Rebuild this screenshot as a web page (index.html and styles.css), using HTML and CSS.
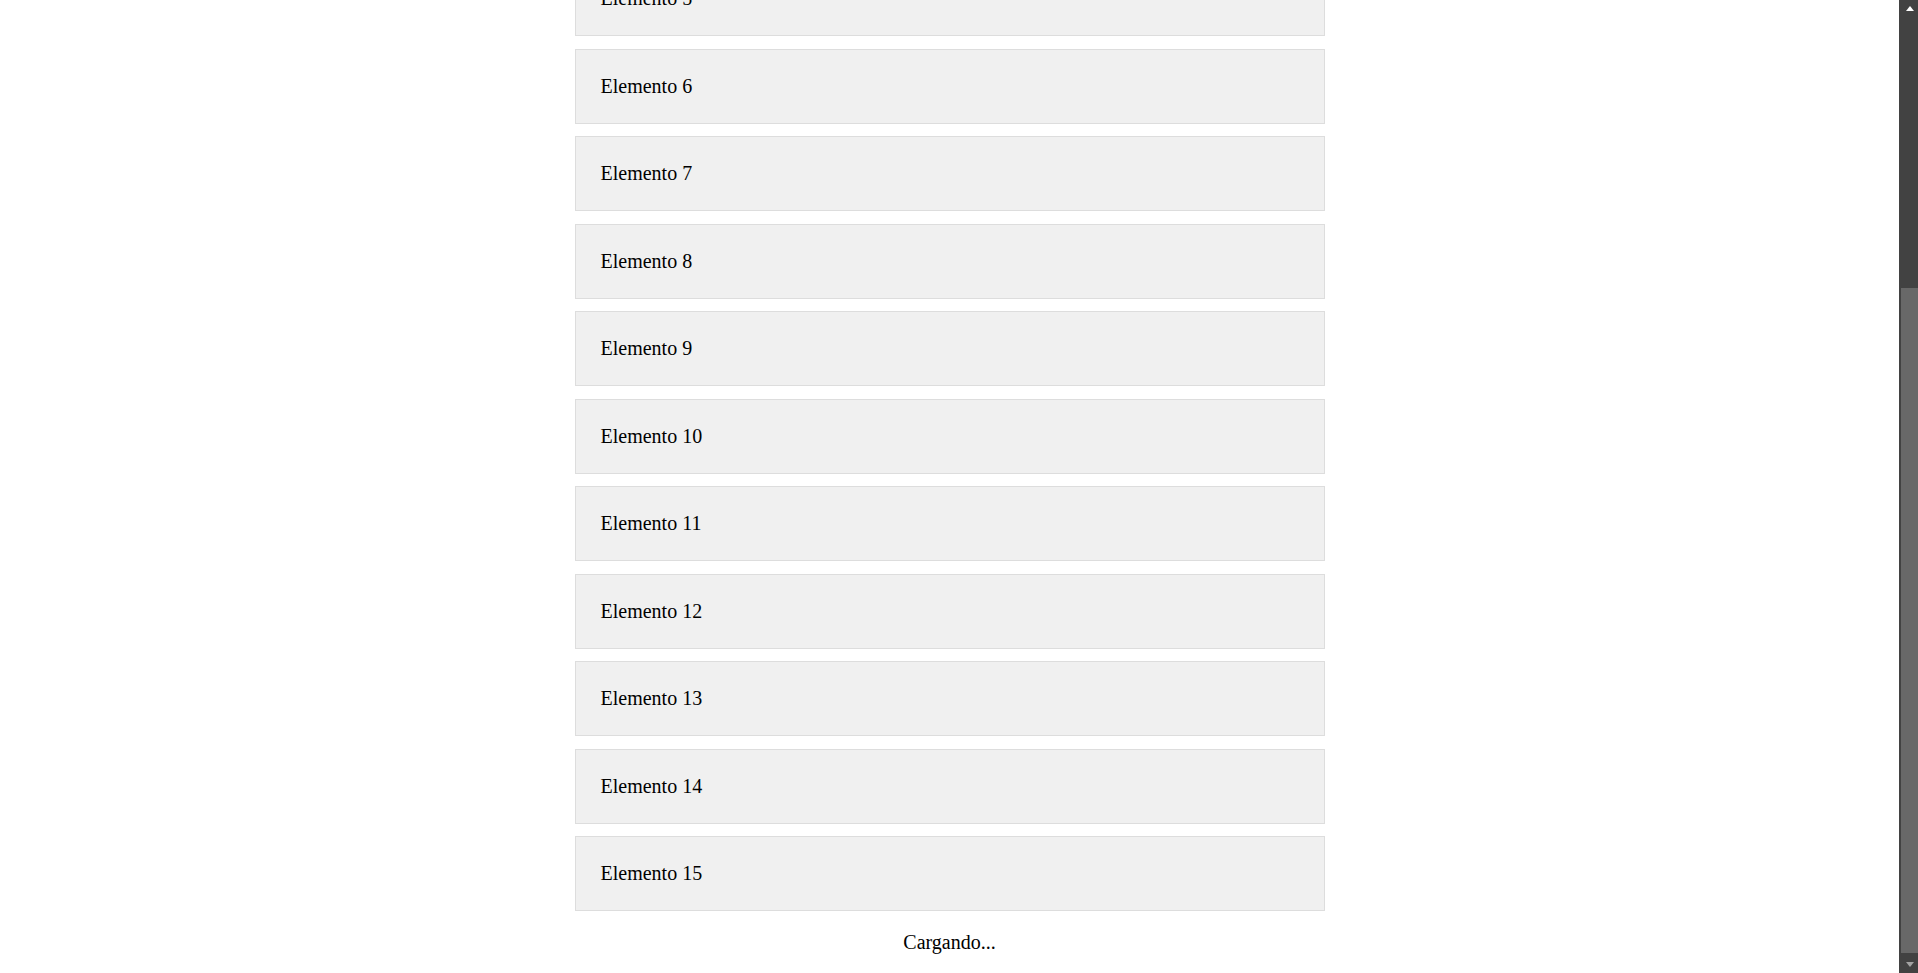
FILE: index.html
```html
<!DOCTYPE html>
<html lang="es">
<head>
<meta charset="utf-8">
<title>Lista</title>
<link rel="stylesheet" href="styles.css">
</head>
<body>
<div class="list">
  <div class="item">Elemento 1</div>
  <div class="item">Elemento 2</div>
  <div class="item">Elemento 3</div>
  <div class="item">Elemento 4</div>
  <div class="item">Elemento 5</div>
  <div class="item">Elemento 6</div>
  <div class="item">Elemento 7</div>
  <div class="item">Elemento 8</div>
  <div class="item">Elemento 9</div>
  <div class="item">Elemento 10</div>
  <div class="item">Elemento 11</div>
  <div class="item">Elemento 12</div>
  <div class="item">Elemento 13</div>
  <div class="item">Elemento 14</div>
  <div class="item">Elemento 15</div>
  <div class="loading">Cargando...</div>
</div>
<div class="scrollbar" aria-hidden="true">
  <div class="sb-btn"><span class="arrow-up"></span></div>
  <div class="sb-track"><div class="sb-thumb"></div></div>
  <div class="sb-btn"><span class="arrow-down"></span></div>
</div>
<script src="script.js"></script>
</body>
</html>
```

FILE: styles.css
```css
html {
  scrollbar-width: none;
}
html::-webkit-scrollbar {
  display: none;
}
body {
  margin: 8px 27px 8px 8px;
  font-family: "Liberation Serif", "Times New Roman", serif;
  font-size: 20px;
  color: #000;
  background: #fff;
}
.list {
  max-width: 750px;
  margin: 0 auto;
}
.item {
  background: #f0f0f0;
  border: 1px solid #ddd;
  padding: 25px;
  line-height: 23px;
}
.item + .item {
  margin-top: 12.5px;
}
.loading {
  text-align: center;
  padding: 20px;
  line-height: 23px;
}
.scrollbar {
  position: fixed;
  top: 0;
  right: 0;
  width: 19px;
  height: 100vh;
  background: #424242;
  display: flex;
  flex-direction: column;
}
.sb-btn {
  height: 17px;
  display: flex;
  align-items: center;
  justify-content: center;
  padding-left: 2px;
}
.arrow-up {
  width: 0;
  height: 0;
  border-left: 4.5px solid transparent;
  border-right: 4.5px solid transparent;
  border-bottom: 5px solid #ffffff;
}
.arrow-down {
  width: 0;
  height: 0;
  border-left: 4.5px solid transparent;
  border-right: 4.5px solid transparent;
  border-top: 5px solid #a3a3a3;
}
.sb-track {
  flex: 1;
  display: flex;
  flex-direction: column;
  padding-left: 2px;
}
.sb-thumb {
  margin-top: 271px;
  height: 665px;
  background: #686868;
}
```

FILE: script.js
```js
window.scrollTo(0, 397);
window.addEventListener('load', function () { window.scrollTo(0, 397); });
```
